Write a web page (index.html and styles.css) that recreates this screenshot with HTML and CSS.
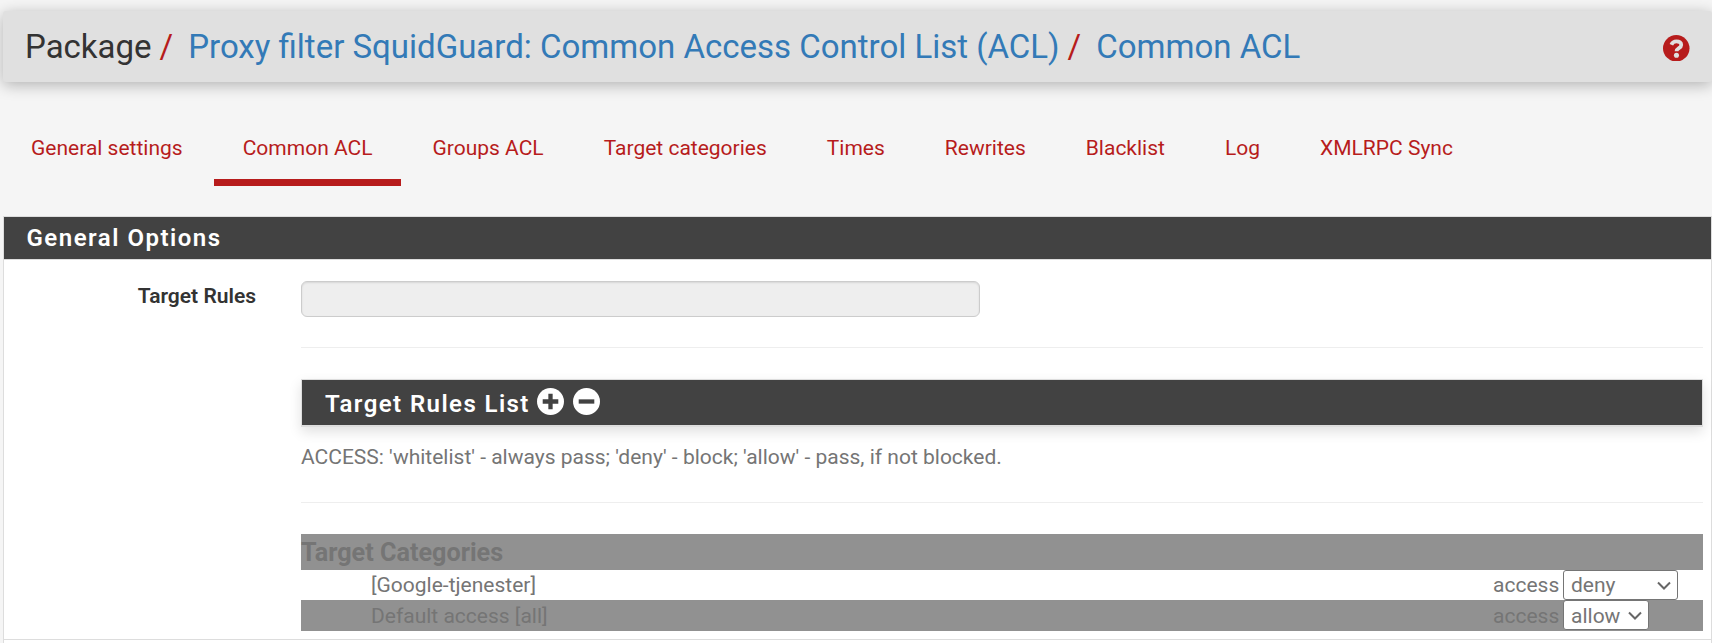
FILE: index.html
```html
<!DOCTYPE html>
<html lang="en">
<head>
<meta charset="utf-8">
<title>Common ACL</title>
<link rel="stylesheet" href="styles.css">
</head>
<body>
<header class="header">
  <h1 class="crumbs"><span class="crumb-root">Package</span><span class="slash">/</span><a class="crumb crumb-main">Proxy filter SquidGuard: Common Access Control List (ACL)</a><span class="slash">/</span><a class="crumb">Common ACL</a></h1>
  <svg class="help" viewBox="0 0 26 26"><circle cx="13" cy="13" r="13" fill="#b71c1c"/><path d="M8.200 9.600C9.200 7.200 10.800 6.200 13.200 6.200c2.900 0 4.700 1.500 4.700 3.600 0 3.300-4.600 2.900-4.600 6.200" fill="none" stroke="#e0e0e0" stroke-width="3.700"/><circle cx="13.200" cy="19.900" r="2.500" fill="#e0e0e0"/></svg>
</header>
<nav class="tabs">
  <a class="tab">General settings</a>
  <a class="tab active">Common ACL</a>
  <a class="tab">Groups ACL</a>
  <a class="tab">Target categories</a>
  <a class="tab">Times</a>
  <a class="tab">Rewrites</a>
  <a class="tab">Blacklist</a>
  <a class="tab">Log</a>
  <a class="tab">XMLRPC Sync</a>
</nav>
<main class="panel">
  <h2 class="panel-title">General Options</h2>
  <section class="group">
    <label class="label">Target Rules</label>
    <div class="content">
      <div class="input"></div>
      <div class="rule"></div>
      <div class="list-head">
        <h2 class="list-title">Target Rules List</h2>
        <svg class="icon" viewBox="0 0 27 27"><circle cx="13.500" cy="13.500" r="13.500" fill="#fff"/><path d="M5.700 13.500h15.600M13.500 5.700v15.600" stroke="#424242" stroke-width="4.300"/></svg>
        <svg class="icon" viewBox="0 0 27 27"><circle cx="13.500" cy="13.500" r="13.500" fill="#fff"/><path d="M5.700 13.500h15.600" stroke="#424242" stroke-width="4.300"/></svg>
      </div>
      <p class="hint">ACCESS: 'whitelist' - always pass; 'deny' - block; 'allow' - pass, if not blocked.</p>
      <div class="rule rule-second"></div>
      <div class="categories">
        <h3 class="cat-title">Target Categories</h3>
        <div class="row">
          <span class="name">[Google-tjenester]</span><span class="access">access</span>
          <div class="select wide"><span>deny</span><svg class="chevron" viewBox="0 0 14 9"><path d="M1 1.500l6 6 6-6"/></svg></div>
        </div>
        <div class="row shaded">
          <span class="name">Default access [all]</span><span class="access">access</span>
          <div class="select"><span>allow</span><svg class="chevron" viewBox="0 0 14 9"><path d="M1 1.500l6 6 6-6"/></svg></div>
        </div>
      </div>
    </div>
  </section>
</main>
</body>
</html>
```

FILE: styles.css
```css
* { box-sizing: border-box; }
body { display: flow-root; margin: 0; height: 643px; background: #f5f5f5; color: #333; font: 400 21px/30px Roboto, sans-serif; white-space: nowrap; }
h1, h2, h3, p { margin: 0; }
.header { display: flex; justify-content: space-between; align-items: center; height: 71px; margin: 11px 0 0 3px; padding: 0 22.500px 0 22px; background: #e0e0e0; border-radius: 3px; box-shadow: 0 3px 15px rgba(0, 0, 0, .28); }
.crumbs { padding-top: 1px; font-size: 33px; line-height: 40px; font-weight: 400; }
.slash { color: #b71c1c; margin: 0 15px 0 8px; }
.crumb { color: #337ab7; }
.help { width: 26.5px; height: 26.5px; margin-top: 3px; }
.tabs { display: flex; gap: 3px; height: 134px; padding-top: 46px; }
.tab { height: 58px; padding: 5px 28px 0 29px; color: #b71c1c; border-bottom: 7px solid transparent; }
.tab:first-child { padding-left: 31px; }
.active { border-color: #b71c1c; }
.panel { height: 427px; margin-left: 3px; background: #fff; border: 1px solid #ddd; border-bottom: 0; }
.panel-title { height: 43px; padding-left: 22.500px; background: #424242; border-bottom: 1px solid #ddd; color: #fff; font-size: 24px; line-height: 42px; font-weight: 600; letter-spacing: 1.5px; }
.group { display: flex; height: 380px; border-bottom: 1px solid #ddd; }
.label { width: 252px; padding-top: 21px; text-align: right; font-weight: 600; }
.content { width: 1402px; margin-left: 45px; padding-top: 21px; color: #757575; }
.input { width: 679px; height: 36px; background: #eee; border: 1px solid #ccc; border-radius: 6px; box-shadow: inset 0 1px 2px rgba(0, 0, 0, .1); }
.rule { height: 1px; margin-top: 30px; background: #eee; }
.list-head { display: flex; align-items: center; gap: 9px; height: 48px; margin-top: 31px; padding: 0 23px 2px; background: #424242; border: 1px solid #ddd; border-bottom-width: 2px; box-shadow: 0 5px 12px rgba(0, 0, 0, .12); color: #fff; }
.list-title { margin-right: -2px; font-size: 24px; line-height: 38px; font-weight: 600; letter-spacing: 1.42px; padding-top: 5px; }
.icon { width: 27px; height: 27px; }
.hint { margin-top: 15px; }
.rule-second { margin-top: 30px; }
.categories { margin-top: 31px; }
.cat-title { height: 36px; background: #919191; font-size: 25.2px; line-height: 38px; font-weight: 700; }
.row { display: flex; height: 30px; padding-left: 70px; }
.shaded { height: 31px; background: #919191; line-height: 32px; }
.shaded .select span { padding-top: 1px; }
.name { width: 1122px; }
.access { width: 70px; }
.select { display: flex; align-items: center; justify-content: space-between; width: 86px; height: 30px; padding: 0 6px 0 7px; background: #fff; border: 1px solid #757575; border-radius: 3px; }
.wide { width: 115px; }
.chevron { width: 14px; height: 9px; fill: none; stroke: #666; stroke-width: 2; }
```
